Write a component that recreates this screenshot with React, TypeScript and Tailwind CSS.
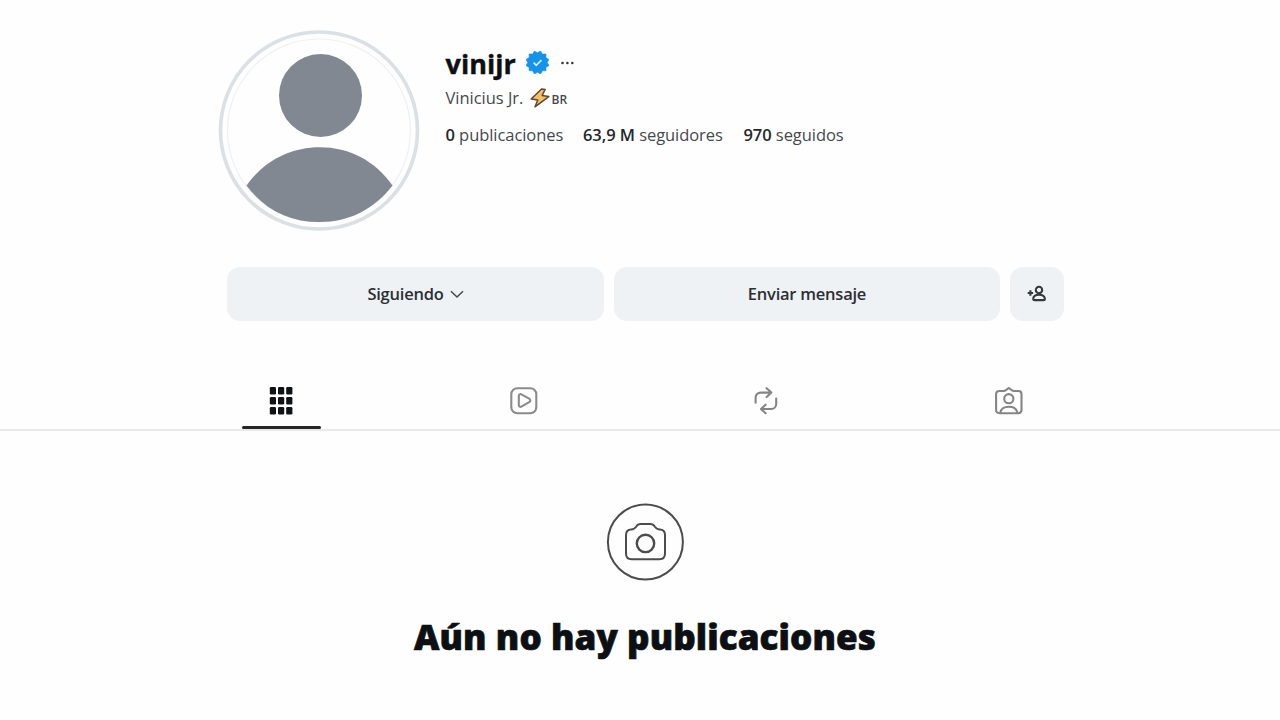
import React from 'react';

const Avatar: React.FC = () => (
  <svg className="w-[204px] h-[204px] shrink-0" viewBox="217 28 204 204" fill="none">
    <circle cx="319" cy="130.5" r="98.5" stroke="#dae0e4" strokeWidth="3.6" />
    <circle cx="319" cy="130.5" r="91.5" stroke="#eef0f2" strokeWidth="1.2" />
    <circle cx="320.5" cy="95.5" r="41.5" fill="#828892" />
    <path d="M246.5 185.5C264 161 290 147.3 320 147.3C349 147.3 375 160.5 392.5 185.5C374 209.5 349 222 319.5 222C290 222 265 210 246.5 185.5Z" fill="#828892" />
  </svg>
);

const VerifiedBadge: React.FC = () => (
  <svg className="w-[23px] h-[23px] -mt-[3px]" viewBox="0 0 40 40">
    <path
      fill="#1593ea"
      stroke="#1593ea"
      strokeWidth="1"
      strokeLinejoin="round"
      d="M19.998 3.094 14.638 0l-2.972 5.15H5.432v6.354L0 14.64 3.094 20 0 25.359l5.432 3.137v5.905h5.975L14.638 40l5.36-3.094L25.358 40l3.232-5.6h6.162v-6.01L40 25.359 36.905 20 40 14.641l-5.248-3.03v-6.46h-6.419L25.358 0l-5.36 3.094Z"
    />
    <path d="M13.2 20.2l4.6 4.6L26.8 15.8" fill="none" stroke="#d5f0ff" strokeWidth="3" />
  </svg>
);

const Dots: React.FC = () => (
  <svg className="w-[14px] h-[4px]" viewBox="0 0 14 4" fill="#35383b">
    <circle cx="2.5" cy="2" r="1.3" />
    <circle cx="7.4" cy="2" r="1.3" />
    <circle cx="12.3" cy="2" r="1.3" />
  </svg>
);

const Bolt: React.FC = () => (
  <svg className="w-[20px] h-[22px]" viewBox="0 0 20 22">
    <path
      d="M11.5 2L1.2 12L7.8 13L5 19.8L18.8 9.6L12.2 8.4L15.2 2.4Z"
      fill="#f8bd62"
      stroke="#5b4a38"
      strokeWidth="1.5"
      strokeLinejoin="round"
    />
  </svg>
);

const AddPerson: React.FC = () => (
  <svg className="w-[20px] h-[18px]" viewBox="0 0 20 18" fill="none" stroke="#35393c" strokeWidth="2.1">
    <path d="M.7 8h5.4M3.4 5.3v5.4" />
    <circle cx="12" cy="5" r="3.2" />
    <path d="M6.2 13.9c.2-2.6 2.3-4.1 5.8-4.1s5.6 1.5 5.9 4.1c0 .8-.6 1.2-1.4 1.2h-8.900c-.8 0-1.400-.4-1.400-1.200Z" />
  </svg>
);

const PostsIcon: React.FC = () => (
  <svg className="w-[24px] h-[28px]" viewBox="0 0 24 28" fill="#101315">
    {[0, 10, 20].map((y) =>
      [0.8, 9, 17.2].map((x) => <rect key={`${x}-${y}`} x={x} y={y} width="6.2" height="7.6" rx="1.3" />)
    )}
  </svg>
);

const ReelsIcon: React.FC = () => (
  <svg className="w-[28px] h-[28px]" viewBox="0 0 28 28" fill="none" stroke="#8b8b8b" strokeWidth="2.1" strokeLinejoin="round">
    <rect x="1.3" y="1.2" width="25" height="25" rx="6" />
    <path d="M8.8 9c0-1.5 1.3-2.3 2.6-1.600l7.800 4.300c1.400.8 1.400 2.600 0 3.400l-7.800 4.500c-1.300.7-2.600-.1-2.600-1.600Z" />
  </svg>
);

const RepostIcon: React.FC = () => (
  <svg className="w-[28px] h-[28px]" viewBox="0 0 28 28" fill="none" stroke="#858585" strokeWidth="2.1" strokeLinecap="round" strokeLinejoin="round">
    <path d="M3.6 15.8V10.6a5 5 0 0 1 5-5H19M14.600 1.2L19.400 5.600l-4.800 4.500" />
    <path d="M24.2 11.500V17a5 5 0 0 1-5 5H9.500M13.600 17.700L9 22l4.600 4.300" />
  </svg>
);

const TaggedIcon: React.FC = () => (
  <svg className="w-[28px] h-[28px]" viewBox="0 0 28 28" fill="none" stroke="#858585" strokeWidth="2.1" strokeLinejoin="round">
    <path d="M4.200 4h4.500c1 0 1.600-.3 2.200-.9L13.800 1l2.900 2.100c.6.600 1.200.9 2.200.9h4.500c1.900 0 3.100 1.200 3.100 3.100v16c0 1.900-1.200 3.100-3.100 3.100H4.200c-1.900 0-3.100-1.200-3.100-3.100v-16C1.100 5.200 2.300 4 4.200 4Z" />
    <circle cx="13.800" cy="11.700" r="4.600" />
    <path d="M5.200 26c.7-4.200 4.100-6.200 8.600-6.200s7.900 2 8.600 6.200" />
  </svg>
);

const CameraIcon: React.FC = () => (
  <svg className="w-[78px] h-[78px]" viewBox="0 0 78 78" fill="none" stroke="#4c4c4c" strokeWidth="2">
    <circle cx="39.400" cy="39" r="37.500" />
    <path
      d="M25.200 26.400c2.300 0 3.600-.8 4.900-2.700 1.200-1.900 2.300-2.700 4.500-2.700h9.800c2.200 0 3.300.8 4.500 2.700 1.300 1.900 2.600 2.700 4.900 2.700 3.400 0 5.200 2.300 5.200 5.500v18.600c0 3.600-2.100 5.700-5.700 5.700H25.700c-3.600 0-5.700-2.100-5.700-5.700V31.900c0-3.200 1.800-5.500 5.200-5.500Z"
      strokeLinejoin="round"
    />
    <circle cx="39.500" cy="40.400" r="8.700" strokeWidth="2.400" />
  </svg>
);

const Header: React.FC = () => (
  <header className="flex pt-[28px] pl-[217px]">
    <Avatar />
    <div className="ml-[24.5px] pt-[18px]">
      <div className="flex items-center h-[36px]">
        <h1 className="w-[80px] text-[27px] leading-[36px] font-bold tracking-[0.05px] text-[#0c1013] [-webkit-text-stroke:0.4px_#0c1013]">vinijr</h1>
        <VerifiedBadge />
        <button className="ml-[11px] -mt-[3px]"><Dots /></button>
      </div>
      <div className="flex items-center h-[32px] text-[#45494c]">
        <span className="w-[84px] text-[16.5px] tracking-[-0.02px]">Vinicius Jr.</span>
        <Bolt />
        <span className="ml-[2px] mt-[3px] text-[12px] font-semibold">BR</span>
      </div>
      <div className="flex items-center mt-[2px] h-[38px] text-[16.5px] tracking-[-0.06px] text-[#45494c]">
        <span className="w-[137.5px]"><b className="font-semibold text-[#24282a]">0</b> publicaciones</span>
        <span className="w-[160.5px]"><b className="font-semibold text-[#24282a]">63,9 M</b> seguidores</span>
        <span><b className="font-semibold text-[#24282a]">970</b> seguidos</span>
      </div>
    </div>
  </header>
);

const Actions: React.FC = () => (
  <div className="flex gap-[10px] mt-[35px] ml-[227px] h-[54px] text-[16.5px] font-semibold tracking-[-0.23px] text-[#2b2f32]">
    <button className="w-[377px] flex items-center justify-center rounded-[13px] bg-[#eef2f5]">
      Siguiendo
      <svg className="ml-[6px] w-[14px] h-[9px]" viewBox="0 0 14 9" fill="none" stroke="#44484b" strokeWidth="1.5">
        <path d="M1 1.200l6 5.800 6-5.800" />
      </svg>
    </button>
    <button className="w-[386px] rounded-[13px] bg-[#eef2f5]">Enviar mensaje</button>
    <button className="w-[54px] flex items-center justify-center rounded-[13px] bg-[#eef2f5]">
      <AddPerson />
    </button>
  </div>
);

const tabs = [PostsIcon, ReelsIcon, RepostIcon, TaggedIcon];

const Tabs: React.FC = () => (
  <nav className="mt-[51px] h-[59px] border-b-2 border-[#e9e9e9] pl-[160px] flex">
    {tabs.map((Icon, i) => (
      <div key={i} className="relative w-[242.5px] pt-[15px] flex justify-center items-start">
        <Icon />
        {i === 0 && <span className="absolute bottom-0 left-[82px] w-[79px] h-[3px] rounded-sm bg-[#24272a]" />}
      </div>
    ))}
  </nav>
);

export default function App() {
  return (
    <div className="w-[1280px] h-[720px] overflow-hidden bg-[#fefefe] font-['Open_Sans','Noto_Sans',sans-serif]">
      <Header />
      <Actions />
      <Tabs />
      {/* Empty state */}
      <main className="flex flex-col items-center pt-[72px] pl-[10px]">
        <CameraIcon />
        <h2 className="mt-[32px] text-[35px] leading-[48px] font-extrabold tracking-[0.1px] whitespace-nowrap text-[#0c1013] [-webkit-text-stroke:0.7px_#0c1013]">
          Aún no hay publicaciones
        </h2>
      </main>
    </div>
  );
}
